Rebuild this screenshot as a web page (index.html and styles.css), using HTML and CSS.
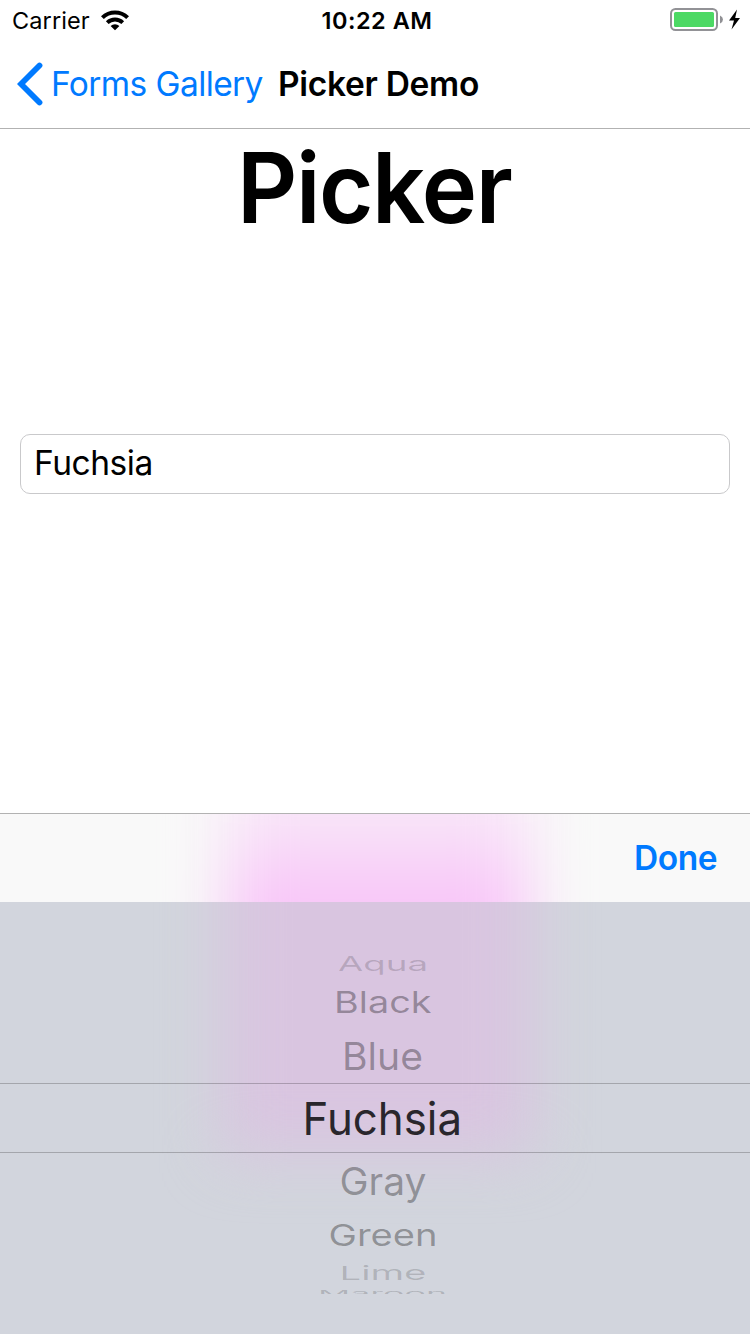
FILE: index.html
```html
<!DOCTYPE html>
<html lang="en">
<head>
<meta charset="utf-8">
<title>Picker Demo</title>
<link rel="stylesheet" href="styles.css">
</head>
<body>
<div class="screen">
  <header class="status">
    <div class="carrier">
      <span>Carrier</span>
      <svg class="wifi" width="28" height="21" viewBox="0 0 28 21"><path d="M0 6.2A20 20 0 0 1 28 6.2L25.2 9.1A16.2 16.2 0 0 0 2.8 9.1ZM4.9 11.2A13.2 13.2 0 0 1 23.1 11.2L20.4 13.9A9.4 9.4 0 0 0 7.6 13.9ZM9.6 15.9A6.5 6.5 0 0 1 18.4 15.9L14 20.3Z"/></svg>
    </div>
    <div class="clock">10:22 AM</div>
    <svg class="battery" width="72" height="24" viewBox="0 0 72 24"><rect x="1" y="1" width="46" height="21" rx="4.5" fill="none" stroke="#929296" stroke-width="2"/><rect x="4" y="4" width="40" height="15" rx="1.5" fill="#4cd964"/><path d="M50 7.5Q53 9 53 11.5T50 15.5Z" fill="#909094"/><path d="M67 1.5L59 12.500H64L61.500 21.500L70 10H65.200Z"/></svg>
  </header>
  <nav class="nav">
    <svg class="chevron" width="26" height="44" viewBox="0 0 26 44"><path d="M22.500 3.500L4 22L22.500 40.500" fill="none" stroke="#007aff" stroke-width="5.800" stroke-linecap="round"/></svg>
    <span class="back">Forms Gallery</span>
    <span class="title">Picker Demo</span>
  </nav>
  <main class="content">
    <h1 class="heading">Picker</h1>
    <div class="field">Fuchsia</div>
  </main>
  <section class="keyboard">
    <div class="toolbar"><span class="done">Done</span></div>
    <div class="wheel">
      <svg class="row faint" width="750" height="32"><text transform="translate(338 23.500) scale(1 .48)" textLength="90" lengthAdjust="spacingAndGlyphs">Aqua</text></svg>
      <svg class="row" width="750" height="45"><text transform="translate(334 33.500) scale(1 .72)" textLength="97.500" lengthAdjust="spacingAndGlyphs">Black</text></svg>
      <svg class="row" width="750" height="59"><text transform="translate(342 45.500) scale(1 .91)" textLength="81" lengthAdjust="spacingAndGlyphs">Blue</text></svg>
      <svg class="row selected" width="750" height="68"><text transform="translate(302.500 51)" textLength="159.500" lengthAdjust="spacingAndGlyphs">Fuchsia</text></svg>
      <svg class="row" width="750" height="57"><text transform="translate(339.500 42) scale(1 .91)" textLength="87" lengthAdjust="spacingAndGlyphs">Gray</text></svg>
      <svg class="row" width="750" height="48"><text transform="translate(328.500 36) scale(1 .72)" textLength="109" lengthAdjust="spacingAndGlyphs">Green</text></svg>
      <svg class="row faint" width="750" height="29"><text transform="translate(339.500 22) scale(1 .46)" textLength="87" lengthAdjust="spacingAndGlyphs">Lime</text></svg>
      <svg class="row faint" width="750" height="7"><text transform="translate(318 9.500) scale(1 .23)" textLength="129" lengthAdjust="spacingAndGlyphs">Maroon</text></svg>
    </div>
  </section>
</div>
</body>
</html>
```
FILE: styles.css
```css
* { box-sizing: border-box; }
body { margin: 0; font-family: Inter, sans-serif; color: #000; }
svg { display: block; }
.screen { width: 750px; height: 1334px; display: flex; flex-direction: column; background: #fff; overflow: hidden; }
.status { height: 40px; display: grid; grid-template-columns: 1fr auto 1fr; align-items: center; padding: 1px 8px 0 12px; font-size: 23.5px; line-height: 39px; }
.carrier { display: flex; gap: 12px; align-items: center; letter-spacing: .1px; }
.carrier .wifi { margin-left: -1px; margin-top: -1px; }
.clock { font-weight: 600; letter-spacing: .5px; }
.battery { justify-self: end; margin-top: -1px; }
.nav { height: 89px; display: flex; align-items: center; padding-left: 17px; border-bottom: 1px solid #b2b2b2; font-size: 33.5px; line-height: 89px; white-space: nowrap; }
.back { margin-left: 8px; width: 227px; color: #007aff; letter-spacing: -.6px; }
.title { font-weight: 600; letter-spacing: -.3px; }
.content { height: 684px; padding: 0 20px; }
.heading { margin: 0; height: 120px; line-height: 119px; font-size: 97.500px; font-weight: 600; letter-spacing: -1.500px; text-align: center; text-indent: -1.500px; transform: scaleX(.96); }
.field { margin-top: 185px; height: 60px; padding-left: 13px; border: 1px solid #c9c9cb; border-radius: 10px; font-size: 33.500px; line-height: 56px; letter-spacing: -.45px; }
.keyboard { height: 521px; }
.toolbar, .wheel { position: relative; isolation: isolate; overflow: hidden; }
.toolbar { height: 89px; padding-right: 33px; border-top: 1px solid #b2b2b2; background: #f9f9f9; line-height: 89px; text-align: right; }
.done { color: #007aff; font-size: 33.500px; font-weight: 600; letter-spacing: -.5px; }
.toolbar::before, .wheel::before { content: ""; position: absolute; z-index: -1; }
.toolbar::before { left: 228px; top: -60px; width: 300px; height: 300px; background: linear-gradient(#f9eef8 0, #f8e6f8 60px, #f8c4f8 150px); filter: blur(30px); }
.wheel { height: 432px; padding-top: 45px; background: #d2d5dd; }
.wheel::before { left: 223px; top: -100px; width: 309px; height: 352px; background: #d9c5e0; filter: blur(29px); }
.row { overflow: hidden; font-size: 41.500px; fill: #000; fill-opacity: .33; }
.faint { fill-opacity: .16; }
.selected { box-sizing: content-box; border-top: 1px solid #00000038; border-bottom: 1px solid #00000038; font-size: 45.500px; fill: #29262c; fill-opacity: 1; }
```
